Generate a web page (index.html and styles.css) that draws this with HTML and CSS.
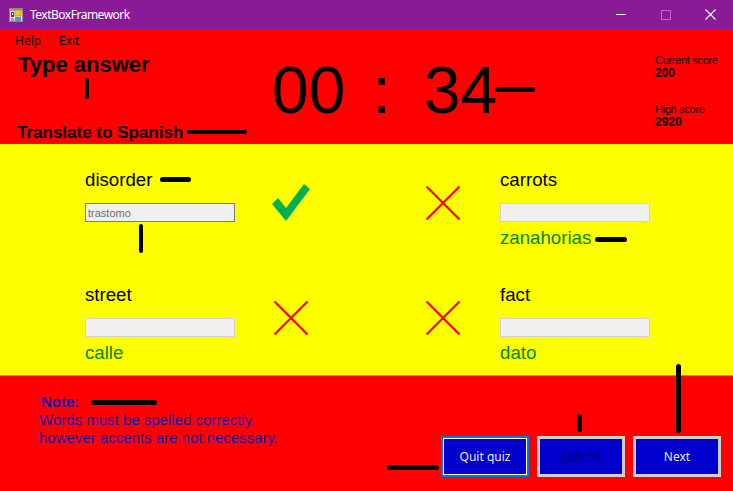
FILE: index.html
```html
<!DOCTYPE html>
<html lang="en">
<head>
<meta charset="utf-8">
<title>TextBoxFramework</title>
<link rel="stylesheet" href="styles.css">
</head>
<body>
<div class="window">
  <header class="titlebar">
    <svg class="app-icon" width="14" height="14" viewBox="0 0 14 14">
      <rect x="0.5" y="0.5" width="13" height="13" fill="#e8e8e8" stroke="#8a8a8a"/>
      <rect x="1" y="1" width="12" height="2" fill="#9a9a9a"/>
      <rect x="2" y="4" width="3" height="5" fill="#d01010"/>
      <rect x="3" y="5" width="1" height="2" fill="#ffffff"/>
      <rect x="6" y="2" width="6" height="6" fill="#f4c430" stroke="#b08000" stroke-width="0.6"/>
      <rect x="6" y="9" width="6" height="4" fill="#5a8fd8"/>
      <rect x="2" y="10" width="3" height="3" fill="#7aa0e0"/>
    </svg>
    <span class="title">TextBoxFramework</span>
    <div class="controls">
      <span class="ctl"><span class="min-line"></span></span>
      <span class="ctl"><span class="max-box"></span></span>
      <span class="ctl">
        <svg width="11" height="11" viewBox="0 0 11 11"><path d="M0.5 0.5 L10.5 10.5 M10.5 0.5 L0.5 10.5" stroke="#ffffff" stroke-width="1.1" fill="none"/></svg>
      </span>
    </div>
  </header>

  <section class="top">
    <div class="left">
      <nav class="menu"><span class="menu-item">Help</span><span class="menu-item">Exit</span></nav>
      <h1 class="type-answer">Type answer</h1>
      <h2 class="translate">Translate to Spanish</h2>
    </div>
    <div class="timer"><span>00</span><span class="colon">:</span><span class="secs">34</span></div>
    <div class="scores">
      <div class="score-label">Current score</div>
      <div class="score-value">200</div>
      <div class="score-label high">High score</div>
      <div class="score-value">2920</div>
    </div>
  </section>

  <section class="words">
    <div class="row">
      <div class="cell">
        <div class="word">disorder</div>
        <input class="box focused" type="text" value="trastomo" readonly>
        <div class="answer"></div>
      </div>
      <div class="icon">
        <svg width="40" height="40" viewBox="0 0 40 40"><polygon points="1,21 7,15 15,25 33,1 39,6 15,38" fill="#00b050"/></svg>
      </div>
      <div class="icon icon-right">
        <svg width="40" height="40" viewBox="0 0 40 40"><path d="M3.5 3.5 L36.5 36.5 M36.5 3.5 L3.5 36.5" stroke="#ff0000" stroke-width="2.2" fill="none"/></svg>
      </div>
      <div class="cell cell-right">
        <div class="word">carrots</div>
        <input class="box" type="text" value="" readonly>
        <div class="answer">zanahorias</div>
      </div>
    </div>
    <div class="row row2">
      <div class="cell">
        <div class="word">street</div>
        <input class="box" type="text" value="" readonly>
        <div class="answer">calle</div>
      </div>
      <div class="icon">
        <svg width="40" height="40" viewBox="0 0 40 40"><path d="M3.5 3.5 L36.5 36.5 M36.5 3.5 L3.5 36.5" stroke="#ff0000" stroke-width="2.2" fill="none"/></svg>
      </div>
      <div class="icon icon-right">
        <svg width="40" height="40" viewBox="0 0 40 40"><path d="M3.5 3.5 L36.5 36.5 M36.5 3.5 L3.5 36.5" stroke="#ff0000" stroke-width="2.2" fill="none"/></svg>
      </div>
      <div class="cell cell-right">
        <div class="word">fact</div>
        <input class="box" type="text" value="" readonly>
        <div class="answer">dato</div>
      </div>
    </div>
  </section>

  <section class="bottom">
    <div class="note">
      <div class="note-title">Note:</div>
      <p class="note-text">Words must be spelled correctly,<br>however accents are not necessary.</p>
    </div>
    <div class="buttons">
      <button class="btn btn-quit">Quit quiz</button>
      <button class="btn btn-submit">Submit</button>
      <button class="btn btn-next">Next</button>
    </div>
  </section>

  <span class="mark m1"></span>
  <span class="mark m2"></span>
  <span class="mark m3"></span>
  <span class="mark m4"></span>
  <span class="mark m5"></span>
  <span class="mark m6"></span>
  <span class="mark m7"></span>
  <span class="mark m8"></span>
  <span class="mark m9"></span>
  <span class="mark m10"></span>
</div>
</body>
</html>
```

FILE: styles.css
```css
* { box-sizing: border-box; }
html, body { margin: 0; padding: 0; }
body {
  width: 733px;
  height: 491px;
  overflow: hidden;
  font-family: "Liberation Sans", Arial, sans-serif;
}
.window {
  position: relative;
  width: 733px;
  height: 491px;
  display: flex;
  flex-direction: column;
}

/* title bar */
.titlebar {
  height: 29px;
  flex: 0 0 29px;
  background: #8a1a96;
  display: flex;
  align-items: center;
  padding-left: 9px;
}
.app-icon { display: block; margin-right: 7px; margin-top: 1px; }
.title {
  font-family: "Noto Sans", "Open Sans", sans-serif;
  font-size: 12px;
  line-height: 16px;
  color: #ffffff;
  letter-spacing: -0.5px;
}
.controls { margin-left: auto; display: flex; height: 29px; }
.ctl {
  width: 45px;
  height: 29px;
  display: flex;
  align-items: center;
  justify-content: center;
}
.min-line { width: 10px; height: 1px; background: #ffffff; }
.max-box { width: 10px; height: 10px; border: 1px solid #b66cbf; }

/* top red area */
.top {
  height: 115px;
  flex: 0 0 115px;
  background: #ff0000;
  display: flex;
}
.left { width: 272px; padding-left: 15px; }
.menu {
  display: flex;
  margin-top: 4px;
  height: 16px;
  font-family: "Noto Sans", "Open Sans", sans-serif;
  font-size: 12px;
  line-height: 16px;
  color: #000000;
}
.menu-item:first-child { width: 44px; }
.type-answer {
  margin: 5px 0 0 3px;
  font-size: 22px;
  line-height: 22px;
  font-weight: bold;
  color: #000000;
}
.translate {
  margin: 48px 0 0 2px;
  font-size: 17px;
  line-height: 17px;
  font-weight: bold;
  color: #000000;
}
.timer {
  width: 383px;
  padding-top: 28px;
  font-size: 66px;
  line-height: 66px;
  color: #000000;
  display: flex;
  align-items: flex-start;
}
.colon { margin-left: 27px; }
.secs { margin-left: 33px; }
.scores {
  padding-top: 25px;
  font-size: 11px;
  line-height: 13px;
  color: #000000;
}
.score-label { letter-spacing: -0.3px; }
.score-value { font-weight: bold; font-size: 12px; }
.score-label.high { margin-top: 23px; }

/* yellow words area */
.words {
  height: 231px;
  flex: 0 0 231px;
  background: #ffff00;
  padding: 24px 0 0 85px;
}
.row { display: flex; align-items: flex-start; }
.row2 { margin-top: 34px; }
.cell { width: 150px; }
.word {
  font-size: 18.67px;
  line-height: 23px;
  height: 23px;
  color: #000000;
}
.box {
  display: block;
  width: 150px;
  height: 19px;
  margin: 12px 0 0 0;
  padding: 0 2px;
  border: 1px solid #d2d2d2;
  background: #f0f0f0;
  font-family: "Liberation Sans", Arial, sans-serif;
  font-size: 11px;
  color: #6d6d6d;
  outline: none;
}
.box.focused { border-color: #7a7a7a; }
.answer {
  margin-top: 4px;
  height: 23px;
  font-size: 18.67px;
  line-height: 23px;
  color: #008a00;
}
.icon { width: 40px; height: 40px; margin: 15px 0 0 36px; }
.icon svg { display: block; }
.icon-right { margin-left: 112px; }
.cell-right { margin-left: 37px; }

/* bottom red area */
.bottom {
  flex: 1 1 auto;
  background: #ff0000;
  border-top: 1px solid #ff7a00;
  display: flex;
  justify-content: space-between;
}
.note { padding: 17px 0 0 39px; color: #1616a8; }
.note-title {
  margin-left: 2px;
  font-size: 15px;
  line-height: 18px;
  font-weight: bold;
}
.note-text {
  margin: 0;
  font-size: 15px;
  line-height: 18px;
}
.buttons {
  align-self: flex-end;
  display: flex;
  gap: 8px;
  margin: 0 12px 14px 0;
}
.btn {
  width: 88px;
  height: 41px;
  background: #0000cd;
  font-family: "Noto Sans", "Open Sans", sans-serif;
  font-size: 12px;
  color: #eeeeff;
  padding: 0;
  border: 3px solid #cfcfcf;
}
.btn-quit {
  border: 2px solid #0078d7;
  box-shadow: inset 0 0 0 1px #ffffff;
}
.btn-submit { color: #000070; }

/* stray black annotation strokes lying over the form */
.mark {
  position: absolute;
  background: #000000;
  border-radius: 3px;
}
.m1 { left: 85px; top: 78px; width: 4px; height: 21px; }
.m2 { left: 187px; top: 130px; width: 60px; height: 4px; }
.m3 { left: 495px; top: 87px; width: 40px; height: 5px; }
.m4 { left: 160px; top: 177px; width: 31px; height: 5px; }
.m5 { left: 139px; top: 224px; width: 4px; height: 29px; }
.m6 { left: 595px; top: 237px; width: 32px; height: 5px; }
.m7 { left: 91px; top: 400px; width: 66px; height: 5px; }
.m8 { left: 577px; top: 414px; width: 5px; height: 18px; }
.m9 { left: 676px; top: 364px; width: 5px; height: 69px; }
.m10 { left: 387px; top: 465px; width: 52px; height: 5px; }
```
